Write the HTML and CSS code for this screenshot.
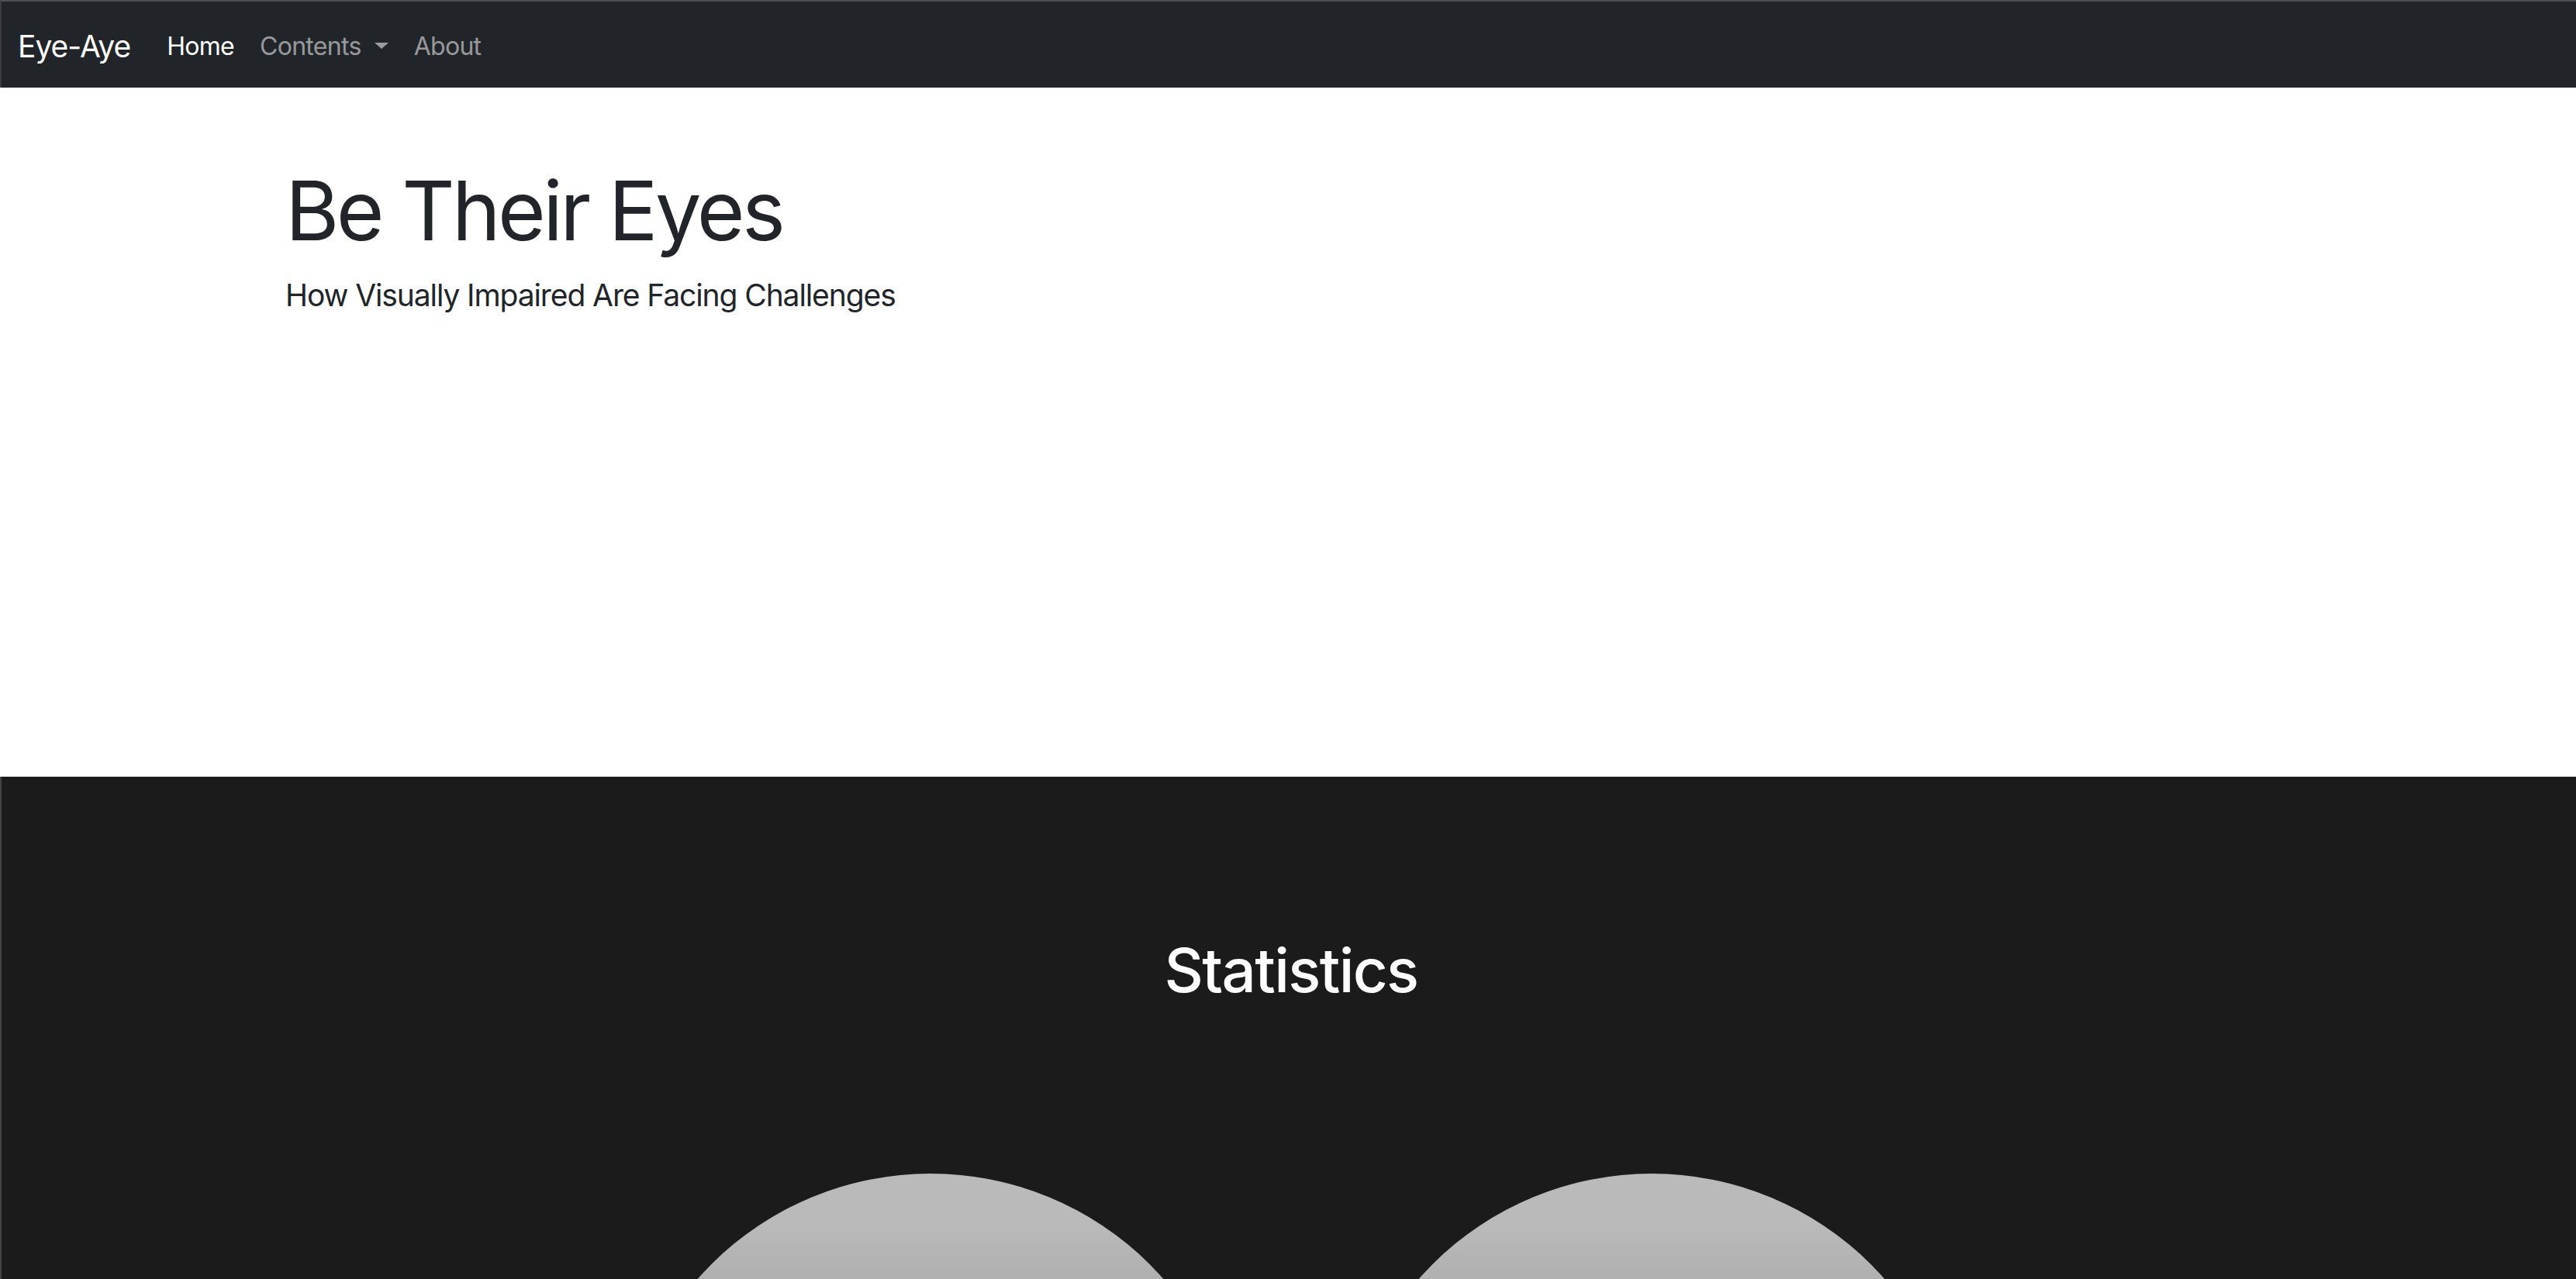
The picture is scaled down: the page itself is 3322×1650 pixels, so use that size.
FILE: index.html
```html
<!DOCTYPE html>
<html lang="en">
<head>
<meta charset="utf-8">
<title>Eye-Aye</title>
<link rel="stylesheet" href="styles.css">
</head>
<body>
<nav class="navbar">
  <a class="brand" href="#">Eye-Aye</a>
  <ul class="nav">
    <li><a class="nav-link active" href="#">Home</a></li>
    <li><a class="nav-link dropdown" href="#">Contents<span class="caret"></span></a></li>
    <li><a class="nav-link" href="#">About</a></li>
  </ul>
</nav>
<header class="hero">
  <h1 class="hero-title">Be Their Eyes</h1>
  <p class="hero-lead">How Visually Impaired Are Facing Challenges</p>
</header>
<section class="stats">
  <h2 class="stats-title">Statistics</h2>
  <div class="stats-row">
    <div class="stat-circle"></div>
    <div class="stat-circle"></div>
  </div>
</section>
</body>
</html>
```
FILE: styles.css
```css
html {
  scrollbar-width: none;
}
html::-webkit-scrollbar {
  display: none;
}
body {
  margin: 0;
  font-family: Inter, "Noto Sans", "Liberation Sans", sans-serif;
  color: #212529;
  background: #fff;
}
a {
  text-decoration: none;
}
.navbar {
  box-sizing: border-box;
  height: 113px;
  border-top: 2px solid #4d4e50;
  border-left: 2px solid #3a3c40;
  background: #212529;
  display: flex;
  align-items: center;
  padding: 4px 0 0 21px;
}
.brand {
  color: #fff;
  font-size: 39px;
  margin-right: 47px;
  letter-spacing: -1px;
}
.nav {
  list-style: none;
  margin: 0;
  padding: 0;
  display: flex;
  align-items: center;
  gap: 33px;
}
.nav-link {
  color: rgba(255, 255, 255, 0.55);
  font-size: 32px;
  display: inline-flex;
  align-items: center;
  letter-spacing: -0.7px;
}
.nav-link.active {
  color: #fff;
}
.caret {
  display: inline-block;
  margin-left: 17px;
  margin-top: -1px;
  border-top: 8px solid rgba(255, 255, 255, 0.55);
  border-left: 9px solid transparent;
  border-right: 9px solid transparent;
}
.hero {
  box-sizing: border-box;
  height: 889px;
  padding: 95px 0 0 368px;
}
.hero-title {
  margin: 0;
  font-size: 106px;
  font-weight: 400;
  line-height: 1.2;
  letter-spacing: -3.6px;
}
.hero-lead {
  margin: 17px 0 0;
  font-size: 39px;
  line-height: 1.5;
  letter-spacing: -1.1px;
}
.stats {
  background: #1b1b1b;
  border-left: 2px solid #444;
  padding: 203px 0 0 6px;
  text-align: center;
}
.stats-title {
  margin: 0;
  color: #fff;
  font-size: 78px;
  font-weight: 500;
  line-height: 1.2;
  letter-spacing: -1.6px;
}
.stats-row {
  display: flex;
  justify-content: center;
  gap: 130px;
  margin-top: 215px;
}
.stat-circle {
  width: 800px;
  height: 800px;
  border-radius: 50%;
  background: linear-gradient(#bababa 0%, #bababa 8%, #b0b0b0 17%, #8a8a8a 100%);
}
```
